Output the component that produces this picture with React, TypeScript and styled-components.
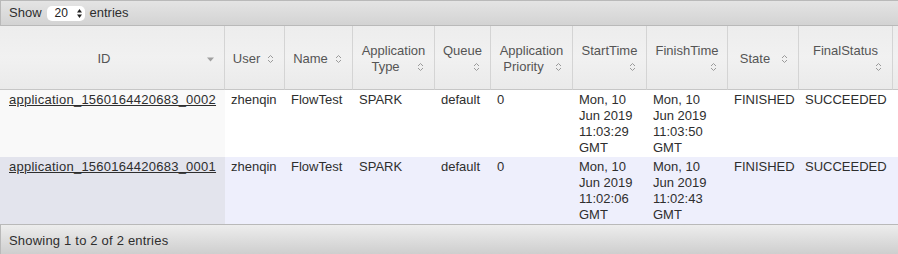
import React from "react";
import styled, { createGlobalStyle } from "styled-components";

const GlobalStyle = createGlobalStyle`
  html, body { margin: 0; padding: 0; background: #ffffff; }
  body { font-family: "Liberation Sans", Arial, sans-serif; font-size: 13px; color: #2e2e2e; }
  * { box-sizing: border-box; }
`;

const Viewport = styled.div`
  width: 898px;
  overflow: hidden;
`;

const Wrapper = styled.div`
  width: 1000px;
`;

const Toolbar = styled.div`
  height: 26px;
  display: flex;
  align-items: center;
  gap: 5px;
  padding: 0 8px;
  border: 1px solid #b9b9b9;
  border-right: none;
  background: linear-gradient(#e4e4e4, #d3d3d3);
  color: #2e2e2e;
  line-height: 16px;
`;

const SelectBox = styled.span`
  display: inline-flex;
  align-items: center;
  justify-content: space-between;
  width: 38px;
  height: 15px;
  padding: 0 3px 0 8px;
  border-radius: 5px;
  background: #ffffff;
  font-size: 12px;
  color: #222;
`;

const Footer = styled.div`
  height: 34px;
  padding: 8px 8px 0;
  border: 1px solid #b9b9b9;
  border-right: none;
  background: linear-gradient(#ededed, #cbcbcb);
  line-height: 16px;
  color: #2e2e2e;
  letter-spacing: 0.2px;
`;

const Table = styled.table`
  border-collapse: separate;
  border-spacing: 0;
  table-layout: fixed;
  width: 993px;
`;

const Th = styled.th`
  height: 64px;
  padding: 3px 6px 0 6px;
  border-right: 1px solid #d4d4d4;
  border-bottom: 1px solid #c6c6c6;
  background: linear-gradient(#ededed 0%, #f1f1f1 50%, #eaeaea 100%);
  font-weight: normal;
  color: #555;
  line-height: 16px;
  vertical-align: middle;
`;

const HeadLine = styled.div`
  text-align: center;
  white-space: nowrap;
`;

const HeadLastLine = styled.div`
  display: flex;
  align-items: center;
  height: 16px;
`;

const HeadText = styled.span`
  flex: 1;
  text-align: center;
  white-space: nowrap;
`;

const IconSlot = styled.span`
  width: 16px;
  height: 16px;
  display: inline-flex;
  align-items: center;
  justify-content: center;
  flex: none;
`;

const Td = styled.td<{ $odd: boolean; $sorted?: boolean }>`
  padding: 2px 6px 1px 6px;
  line-height: 16px;
  vertical-align: top;
  color: #2e2e2e;
  background: ${(p) =>
    p.$odd ? (p.$sorted ? "#e3e4ed" : "#eeeffc") : p.$sorted ? "#f9f9f9" : "#ffffff"};
`;

const IdCell = styled(Td)`
  padding-left: 9px;
  white-space: nowrap;
  letter-spacing: 0.25px;
`;

const AppLink = styled.a`
  color: #2e2e2e;
  text-decoration: underline;
`;

const Line = styled.div`
  white-space: nowrap;
`;

const SortBoth = () => (
  <svg width="7" height="10" viewBox="0 0 7 10">
    <polyline points="1,4 3.5,1.5 6,4" fill="none" stroke="#9a9a9a" strokeWidth="1" />
    <polyline points="1,6 3.5,8.5 6,6" fill="none" stroke="#9a9a9a" strokeWidth="1" />
  </svg>
);

const SortDesc = () => (
  <svg width="7" height="5" viewBox="0 0 7 5">
    <polygon points="0,0.5 7,0.5 3.5,4.5" fill="#a0a0a0" />
  </svg>
);

const SelectArrows = () => (
  <svg width="5" height="9" viewBox="0 0 5 9">
    <polygon points="0,3.5 5,3.5 2.5,0" fill="#222" />
    <polygon points="0,5.5 5,5.5 2.5,9" fill="#222" />
  </svg>
);

type Header = { lines: string[]; desc?: boolean };

const headers: Header[] = [
  { lines: ["ID"], desc: true },
  { lines: ["User"] },
  { lines: ["Name"] },
  { lines: ["Application", "Type"] },
  { lines: ["Queue", ""] },
  { lines: ["Application", "Priority"] },
  { lines: ["StartTime", ""] },
  { lines: ["FinishTime", ""] },
  { lines: ["State"] },
  { lines: ["FinalStatus", ""] },
];

const widths = [225, 60, 68, 82, 56, 82, 74, 81, 71, 94, 100];

type Row = {
  id: string;
  start: string[];
  finish: string[];
};

const rows: Row[] = [
  {
    id: "application_1560164420683_0002",
    start: ["Mon, 10", "Jun 2019", "11:03:29", "GMT"],
    finish: ["Mon, 10", "Jun 2019", "11:03:50", "GMT"],
  },
  {
    id: "application_1560164420683_0001",
    start: ["Mon, 10", "Jun 2019", "11:02:06", "GMT"],
    finish: ["Mon, 10", "Jun 2019", "11:02:43", "GMT"],
  },
];

const HeaderCell = ({ h }: { h: Header }) => {
  const first = h.lines.slice(0, -1);
  const last = h.lines[h.lines.length - 1];
  return (
    <Th>
      {first.map((l) => (
        <HeadLine key={l}>{l}</HeadLine>
      ))}
      <HeadLastLine>
        <HeadText>{last}</HeadText>
        <IconSlot>{h.desc ? <SortDesc /> : <SortBoth />}</IconSlot>
      </HeadLastLine>
    </Th>
  );
};

export default function App() {
  return (
    <Viewport>
      <GlobalStyle />
      <Wrapper>
        <Toolbar>
          <span>Show</span>
          <SelectBox>
            <span>20</span>
            <SelectArrows />
          </SelectBox>
          <span>entries</span>
        </Toolbar>
        <Table>
          <colgroup>
            {widths.map((w, i) => (
              <col key={i} style={{ width: w }} />
            ))}
          </colgroup>
          <thead>
            <tr>
              {headers.map((h) => (
                <HeaderCell key={h.lines.join(" ")} h={h} />
              ))}
              <Th />
            </tr>
          </thead>
          <tbody>
            {rows.map((r, i) => {
              const odd = i % 2 === 1;
              return (
                <tr key={r.id}>
                  <IdCell $odd={odd} $sorted>
                    <AppLink href="#">{r.id}</AppLink>
                  </IdCell>
                  <Td $odd={odd}>zhenqin</Td>
                  <Td $odd={odd}>FlowTest</Td>
                  <Td $odd={odd}>SPARK</Td>
                  <Td $odd={odd}>default</Td>
                  <Td $odd={odd}>0</Td>
                  <Td $odd={odd}>
                    {r.start.map((s) => (
                      <Line key={s}>{s}</Line>
                    ))}
                  </Td>
                  <Td $odd={odd}>
                    {r.finish.map((s) => (
                      <Line key={s}>{s}</Line>
                    ))}
                  </Td>
                  <Td $odd={odd}>FINISHED</Td>
                  <Td $odd={odd}>SUCCEEDED</Td>
                  <Td $odd={odd}></Td>
                </tr>
              );
            })}
          </tbody>
        </Table>
        <Footer>Showing 1 to 2 of 2 entries</Footer>
      </Wrapper>
    </Viewport>
  );
}
